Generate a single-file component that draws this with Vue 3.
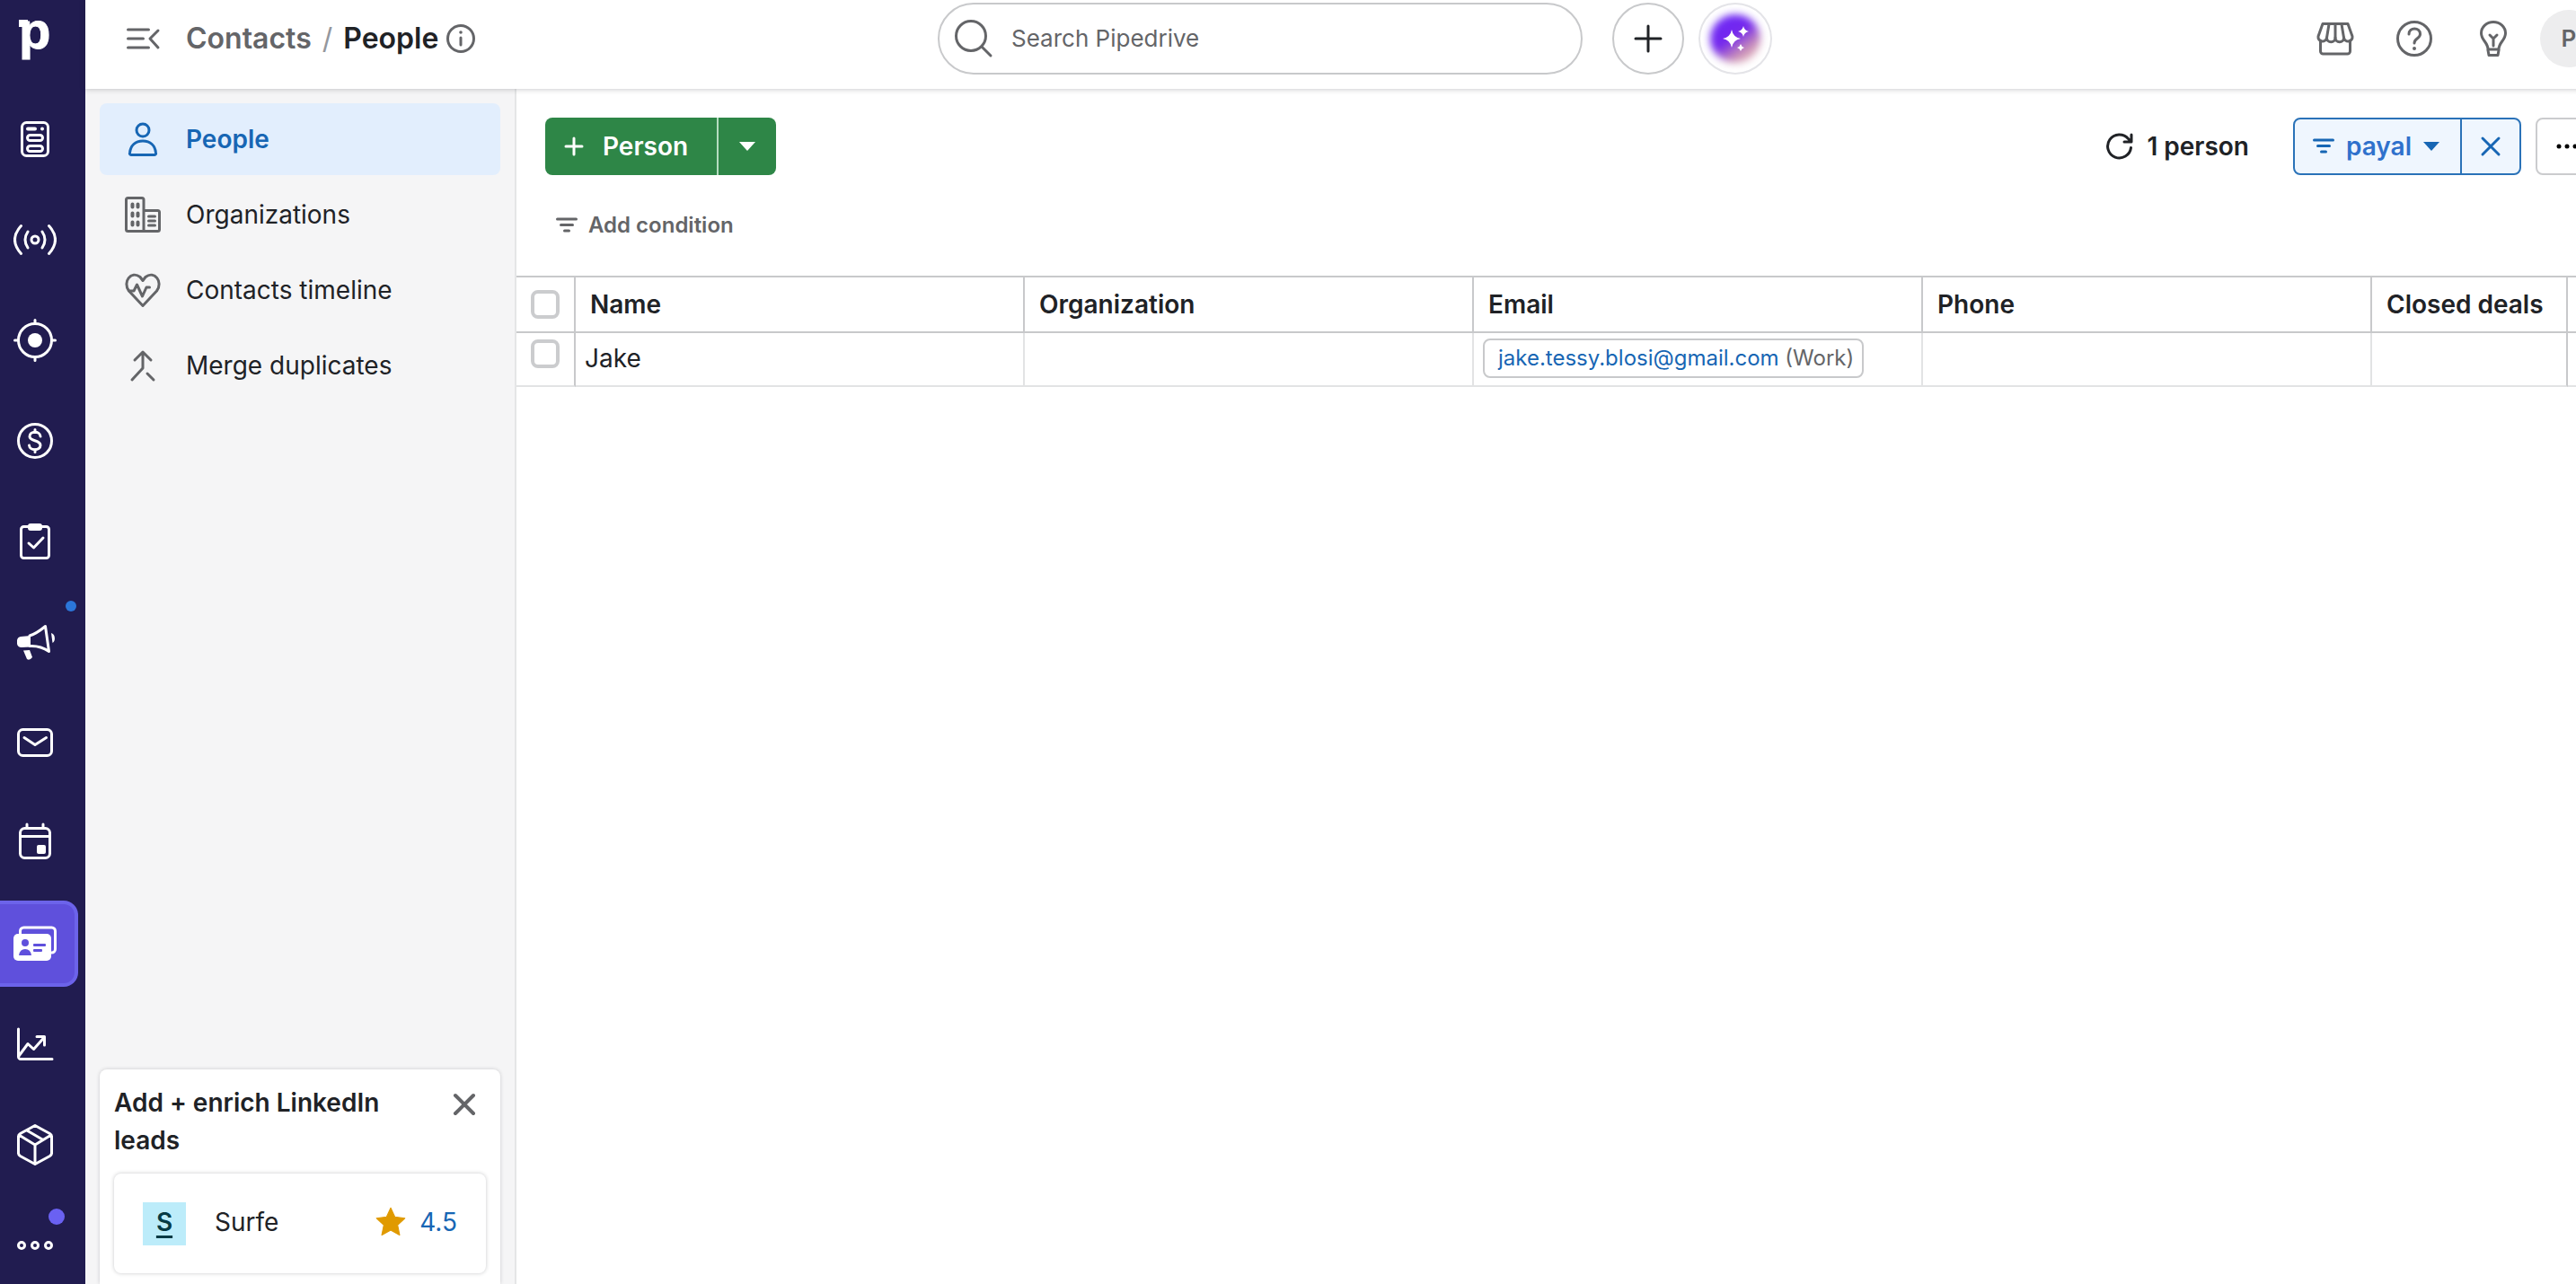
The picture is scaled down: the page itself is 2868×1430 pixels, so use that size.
<template>
    <div class="viewport">
        <div class="app">
            <nav class="rail" aria-label="Main">
                <a href="#" class="logo" aria-label="Pipedrive"><span>p</span></a>
                <a v-for="item in railItems" :key="item.name" href="#" class="rail-item" :class="{ active: item.active }"
                    :aria-label="item.name">
                    <svg class="icon" viewBox="0 0 48 48" v-html="item.icon"></svg>
                    <i v-if="item.dot" class="dot" :class="item.dot"></i>
                </a>
            </nav>

            <div class="page">
                <header class="topbar">
                    <div class="crumbs">
                        <button class="plain" aria-label="Collapse menu">
                            <svg class="icon" viewBox="0 0 48 48">
                                <path d="M7.500 14h23M7.500 24h17M7.500 34h23M41 15l-9 9 9 10" />
                            </svg>
                        </button>
                        <h1>
                            <a href="#">Contacts</a>
                            <span class="slash">/</span>
                            <span>People</span>
                        </h1>
                        <svg class="icon info" viewBox="0 0 36 36">
                            <circle cx="18" cy="18" r="14.500" />
                            <path d="M18 17v8" />
                            <circle cx="18" cy="11" r="1.800" class="solid" />
                        </svg>
                    </div>
                    <label class="search">
                        <svg class="icon" viewBox="0 0 48 48">
                            <circle cx="21" cy="21" r="16.500" />
                            <path d="M33 33l10 10" />
                        </svg>
                        <input type="text" placeholder="Search Pipedrive" aria-label="Search Pipedrive">
                    </label>
                    <div class="quick">
                        <button class="round" aria-label="Quick add">
                            <svg class="icon" viewBox="0 0 48 48">
                                <path d="M24 10v28M10 24h28" />
                            </svg>
                        </button>
                        <button class="round ai" aria-label="Assistant">
                            <span class="glow"></span>
                            <svg viewBox="0 0 48 48">
                                <path d="M20 14q1.500 8.500 10 10q-8.500 1.500-10 10q-1.500-8.500-10-10q8.500-1.500 10-10z" />
                                <path d="M33 10q1 5 6 6q-5 1-6 6q-1-5-6-6q5-1 6-6z" />
                                <path d="M30 30q.8 3.200 4 4q-3.200.8-4 4q-.8-3.200-4-4q3.200-.8 4-4z" />
                            </svg>
                        </button>
                    </div>
                    <div class="tools">
                        <button class="plain" aria-label="Marketplace">
                            <svg class="icon" viewBox="0 0 48 48">
                                <path d="M10 7.500h28l5 14a4.500 4.500 0 0 1-9.500 1.500a4.700 4.700 0 0 1-9.500 0a4.700 4.700 0 0 1-9.500 0a4.500 4.500 0 0 1-9.500-1.500z" />
                                <path d="M17 8l-2.500 15M24 8v15M31 8l2.500 15M7.500 26v12a3 3 0 0 0 3 3h27a3 3 0 0 0 3-3V26" />
                            </svg>
                        </button>
                        <button class="plain" aria-label="Help">
                            <svg class="icon" viewBox="0 0 48 48">
                                <circle cx="24" cy="24" r="18.500" />
                                <path d="M18 19c0-8 12.500-8 12.500 0c0 5-6.500 4.500-6.500 10" />
                                <circle cx="24" cy="35" r="2" class="solid" />
                            </svg>
                        </button>
                        <button class="plain" aria-label="Tips">
                            <svg class="icon" viewBox="0 0 48 48">
                                <path d="M18 36c0-8-7.500-10-7.500-18a13.500 12.500 0 0 1 27 0c0 8-7.500 10-7.500 18z" />
                                <path d="M18 37l1 5.500h10l1-5.500M20 20l4 4 4-4M24 24v8" />
                            </svg>
                        </button>
                        <button class="avatar" aria-label="Account">P</button>
                    </div>
                </header>

                <div class="body">
                    <aside class="side">
                        <nav class="side-nav" aria-label="Contacts">
                            <a v-for="link in sideLinks" :key="link.label" href="#" :class="{ current: link.current }">
                                <svg class="icon" viewBox="0 0 48 48" v-html="link.icon"></svg>
                                {{ link.label }}
                            </a>
                        </nav>
                        <section class="promo">
                            <div class="promo-head">
                                <h2>Add + enrich LinkedIn leads</h2>
                                <button class="plain" aria-label="Dismiss">
                                    <svg class="icon bold" viewBox="0 0 32 32">
                                        <path d="M6 6l20 20M26 6L6 26" />
                                    </svg>
                                </button>
                            </div>
                            <a href="#" class="promo-app">
                                <span class="surfe">S</span>
                                <span class="promo-name">Surfe</span>
                                <svg class="star" viewBox="0 0 32 32">
                                    <path d="M16 2l4.200 9 9.800 1.200-7.200 6.700 2 9.900L16 24l-8.800 4.800 2-9.900L2 12.200 11.800 11z" />
                                </svg>
                                <span class="rating">4.5</span>
                            </a>
                        </section>
                    </aside>

                    <main class="main">
                        <div class="toolbar">
                            <div class="split green">
                                <button class="add">
                                    <svg class="icon" viewBox="0 0 24 24">
                                        <path d="M12 3v18M3 12h18" />
                                    </svg>
                                    Person
                                </button>
                                <button class="more" aria-label="More ways to add"><i class="caret"></i></button>
                            </div>
                            <div class="spacer"></div>
                            <button class="plain count">
                                <svg class="icon" viewBox="0 0 32 32">
                                    <path d="M28.500 17.500a13 13 0 1 1-3-10l3 3M29 3v8h-8" />
                                </svg>
                                1 person
                            </button>
                            <div class="split blue">
                                <button class="filter">
                                    <svg class="icon" viewBox="0 0 24 24">
                                        <path d="M1.500 5h21M5.500 11.500h13M9.500 18h5" />
                                    </svg>
                                    payal
                                    <i class="caret"></i>
                                </button>
                                <button class="clear" aria-label="Clear filter">
                                    <svg class="icon" viewBox="0 0 24 24">
                                        <path d="M3 3l18 18M21 3L3 21" />
                                    </svg>
                                </button>
                            </div>
                            <button class="overflow" aria-label="More options">
                                <svg viewBox="0 0 24 24">
                                    <circle cx="3" cy="12" r="2.500" />
                                    <circle cx="12" cy="12" r="2.500" />
                                    <circle cx="21" cy="12" r="2.500" />
                                </svg>
                            </button>
                        </div>
                        <button class="plain condition">
                            <svg class="icon" viewBox="0 0 24 24">
                                <path d="M1.500 5h21M5.500 11.500h13M9.500 18h5" />
                            </svg>
                            Add condition
                        </button>

                        <table>
                            <colgroup>
                                <col class="c-check">
                                <col v-for="n in 4" :key="n" class="c-wide">
                                <col class="c-deals">
                                <col>
                            </colgroup>
                            <thead>
                                <tr>
                                    <th><input type="checkbox" aria-label="Select all"></th>
                                    <th v-for="col in columns" :key="col">{{ col }}</th>
                                    <th></th>
                                </tr>
                            </thead>
                            <tbody>
                                <tr v-for="person in people" :key="person.email">
                                    <td><input type="checkbox" :aria-label="'Select ' + person.name"></td>
                                    <td>{{ person.name }}</td>
                                    <td></td>
                                    <td>
                                        <span class="email"><a href="#">{{ person.email }}</a> ({{ person.type }})</span>
                                    </td>
                                    <td></td>
                                    <td></td>
                                    <td></td>
                                </tr>
                            </tbody>
                        </table>
                    </main>
                </div>
            </div>
        </div>
    </div>
</template>

<script setup>
const railItems = [
    {
        name: 'Pulse',
        icon: '<rect x="9.500" y="5.500" width="29" height="37" rx="5"/><path d="M16 12.500h8" stroke-width="4"/><circle cx="32" cy="12.500" r="2" class="solid"/><rect x="15.500" y="19.500" width="17" height="6" rx="3"/><rect x="15.500" y="31.500" width="17" height="6" rx="3"/>',
    },
    {
        name: 'Prospecting',
        icon: '<circle cx="24" cy="24" r="4"/><path d="M16 15q-6 9 0 18M32 15q6 9 0 18M8.500 8.500q-14 15.500 0 31M39.500 8.500q14 15.500 0 31"/>',
    },
    {
        name: 'Leads',
        icon: '<circle cx="24" cy="24" r="18.500"/><circle cx="24" cy="24" r="8" class="solid"/><path d="M24 1.500v4M24 42.500v4M1.500 24h4M42.500 24h4"/>',
    },
    {
        name: 'Deals',
        icon: '<circle cx="24" cy="24" r="18.500"/><path d="M30 19c-.5-6.500-12-6-12 0c0 6 12 3.500 12 10c0 6-12 6.500-12.500 0M24 11.500v3M24 33.500v3"/>',
    },
    {
        name: 'Projects',
        icon: '<rect x="8.500" y="7.500" width="31" height="35" rx="3"/><rect x="16" y="4" width="16" height="8" rx="3" class="solid"/><path d="M17 26l5.500 5L33 20"/>',
    },
    {
        name: 'Campaigns',
        dot: 'small',
        icon: '<path d="M18 17C25 15 30 11 35.500 6.500L39.500 34.500C33 30 26 28 18 28.500"/><path class="solid" d="M19 17v12.500l-10 .5a5 5 0 0 1-5-4v-4a5 5 0 0 1 4-4z"/><path class="solid" d="M11 33.500l7-.5 3 8q-3 4-6 2zM42 14a5 6 0 0 1 1.500 11z"/>',
    },
    {
        name: 'Mail',
        icon: '<rect x="5.500" y="9.500" width="37" height="29" rx="5"/><path d="M12 18.500l12 8 12.500-8"/>',
    },
    {
        name: 'Activities',
        icon: '<rect x="7.500" y="7.500" width="33" height="33" rx="5"/><path d="M8 16.500h32M15 3v4M33 3v4"/><rect x="26" y="26" width="10" height="10" rx="2" class="solid"/>',
    },
    {
        name: 'Contacts',
        active: true,
        icon: '<path d="M7.500 14V10a4 4 0 0 1 4-4h31a4 4 0 0 1 4 4v20a4 4 0 0 1-4 4"/><rect x="0" y="13" width="42" height="30" rx="5" class="solid"/><g class="cut"><circle cx="13" cy="23" r="4"/><path d="M6 37q1-7 7-7t7 7z"/><rect x="22" y="24" width="14" height="3" rx="1"/><rect x="22" y="30" width="10" height="3" rx="1"/></g>',
    },
    {
        name: 'Insights',
        icon: '<path d="M5.500 7v31a2.500 2.500 0 0 0 2.500 2.500h35M6 37l10-13.500 6.500 6L34.500 16M26 15.500h8.500V25"/>',
    },
    {
        name: 'Products',
        icon: '<path d="M24 2.500l16.500 9a4 4 0 0 1 2 3v19a4 4 0 0 1-2 3L24 45.500l-16.500-9a4 4 0 0 1-2-3v-19a4 4 0 0 1 2-3zM6 13l18 11 18-11M24 24v21M15 8l18 10.500"/>',
    },
    {
        name: 'More',
        dot: 'large',
        icon: '<circle cx="9" cy="24" r="3.500"/><circle cx="24" cy="24" r="3.500"/><circle cx="39" cy="24" r="3.500"/>',
    },
];

const sideLinks = [
    {
        label: 'People',
        current: true,
        icon: '<circle cx="24" cy="14" r="7"/><path d="M11 41.500a1.800 1.800 0 0 1-1.500-2.500c1-8 6-13 14.500-13s13.500 5 14.500 13a1.800 1.800 0 0 1-1.500 2.500z"/>',
    },
    {
        label: 'Organizations',
        icon: '<path d="M25 42.500V7.500a2 2 0 0 0-2-2H7.500a2 2 0 0 0-2 2v33a2 2 0 0 0 2 2h33a2 2 0 0 0 2-2v-19a2 2 0 0 0-2-2H25"/><path stroke-width="4" d="M12.500 12.500v3M18.500 12.500v3M12.500 22.500v3M18.500 22.500v3M12.500 32.500v3M18.500 32.500v3"/><path d="M30.500 26h7M30.500 31h7M30.500 36h7"/>',
    },
    {
        label: 'Contacts timeline',
        icon: '<path d="M24 41.500L8.500 25C1 15 11 2 21 9.500l3 4 3-4C37 2 47 15 39.500 25z"/><path d="M9 25h5l3.500-7 6 13 4.500-10h3.500"/>',
    },
    {
        label: 'Merge duplicates',
        icon: '<path d="M15 18l9-9 9 9M24 9.500V27L12 40M29 33l7 7"/>',
    },
];

const columns = ['Name', 'Organization', 'Email', 'Phone', 'Closed deals'];

const people = [
    { name: 'Jake', email: 'jake.tessy.blosi@gmail.com', type: 'Work' },
];
</script>

<style>
body {
    margin: 0;
    background: #fff;
}
</style>

<style scoped>
.viewport {
    height: 100vh;
    overflow: hidden;
    font-family: Inter, 'Liberation Sans', sans-serif;
    font-size: 28px;
    line-height: 40px;
    color: #202226;
}

/* the layout runs slightly past the right edge of the window */
.app {
    display: flex;
    width: calc(100% + 24px);
    height: 100%;
}

.viewport * {
    box-sizing: border-box;
}

a {
    color: inherit;
    text-decoration: none;
}

button {
    display: flex;
    align-items: center;
    justify-content: center;
    margin: 0;
    padding: 0;
    border: 0;
    background: none;
    font: inherit;
    font-weight: 600;
    color: inherit;
}

svg {
    display: block;
    flex: none;
    width: 48px;
    height: 48px;
}

.icon {
    fill: none;
    stroke: currentColor;
    stroke-width: 3;
    stroke-linecap: round;
    stroke-linejoin: round;
}

.icon :deep(.solid),
.icon .solid {
    fill: currentColor;
    stroke: none;
}

.icon :deep(.cut) {
    fill: #5f50dc;
    stroke: none;
}

.plain {
    color: #646568;
}

/* left rail */
.rail {
    flex: none;
    display: flex;
    flex-direction: column;
    gap: 16px;
    width: 95px;
    background: #211c50;
    color: #fff;
}

.logo {
    flex: none;
    height: 91px;
    padding-left: 21px;
    font-family: 'Liberation Sans', sans-serif;
    font-size: 58px;
    font-weight: 700;
    line-height: 68px;
    -webkit-text-stroke: 1px #fff;
}

.logo span {
    position: relative;
}

.logo span::before {
    content: '';
    position: absolute;
    left: 0;
    top: 21px;
    width: 10px;
    height: 8px;
    background: #fff;
}

.rail-item {
    position: relative;
    flex: none;
    display: flex;
    align-items: center;
    width: 87px;
    height: 96px;
    padding-left: 15px;
}

.rail-item.active {
    border: 4px solid #6c63ea;
    border-left: 0;
    border-radius: 0 16px 16px 0;
    background: #5f50dc;
}

.dot {
    position: absolute;
    border-radius: 50%;
}

.dot.small {
    top: 2px;
    right: 2px;
    width: 12px;
    height: 12px;
    background: #2b76d9;
}

.dot.large {
    top: 7px;
    right: 15px;
    width: 18px;
    height: 18px;
    background: #6a61f2;
}

/* header */
.page {
    flex: 1;
    display: flex;
    flex-direction: column;
    min-width: 0;
}

.topbar {
    position: relative;
    z-index: 1;
    display: grid;
    grid-template-columns: 949px minmax(400px, 718px) auto 1fr;
    align-items: start;
    height: 99px;
    padding-top: 3px;
    background: #fff;
    box-shadow: 0 0 6px rgba(33, 35, 44, 0.3);
}

.crumbs {
    display: flex;
    align-items: center;
    height: 80px;
    padding-left: 40px;
}

.crumbs h1 {
    margin: 0 7px 0 24px;
    font-size: 32px;
    font-weight: 600;
    white-space: nowrap;
}

.crumbs h1 a {
    color: #646568;
}

.slash {
    margin: 0 4px;
    padding: 0 8px;
    font-weight: 400;
    color: #94979d;
}

.info {
    width: 36px;
    height: 36px;
    color: #646568;
}

.search {
    display: flex;
    align-items: center;
    gap: 18px;
    height: 80px;
    padding: 0 24px 0 14px;
    border: 2px solid #c8c9cb;
    border-radius: 40px;
    font-size: 26px;
    color: #646568;
}

.search input {
    flex: 1;
    min-width: 0;
    padding: 0;
    border: 0;
    outline: 0;
    background: none;
    font: inherit;
}

.search input::placeholder {
    color: #646568;
    opacity: 1;
}

.quick {
    display: flex;
    gap: 16px;
    margin-left: 33px;
}

.round {
    position: relative;
    width: 80px;
    height: 80px;
    border: 2px solid #c8c9cb;
    border-radius: 50%;
}

.round.ai {
    width: 82px;
    border-color: #e4e4e8;
}

.glow {
    position: absolute;
    inset: 11px;
    border-radius: 50%;
    background: linear-gradient(145deg, #6f2cf5 10%, #7326ee 45%, #c990b8 72%, #f8d3c0 100%);
    filter: blur(4px);
}

.ai svg {
    position: relative;
    fill: #fff;
}

.tools {
    display: flex;
    align-items: center;
    justify-content: flex-end;
    gap: 40px;
    height: 80px;
}

.avatar {
    width: 64px;
    height: 64px;
    margin-left: -12px;
    border-radius: 50%;
    background: #ededee;
    font-size: 26px;
    color: #646568;
}

/* secondary navigation */
.body {
    flex: 1;
    display: flex;
    min-height: 0;
}

.side {
    flex: none;
    display: flex;
    flex-direction: column;
    justify-content: space-between;
    width: 480px;
    padding: 16px 16px 0;
    border-right: 2px solid #e5e6e7;
    background: #f5f5f6;
}

.side-nav {
    display: flex;
    flex-direction: column;
    gap: 4px;
}

.side-nav a {
    display: flex;
    align-items: center;
    gap: 24px;
    height: 80px;
    padding-left: 24px;
    border-radius: 8px;
}

.side-nav .icon {
    color: #646568;
}

.side-nav .current {
    background: #e2eefd;
    font-weight: 600;
    color: #1766b4;
}

.side-nav .current .icon {
    color: inherit;
}

.promo {
    padding: 16px 16px 12px;
    border-radius: 8px 8px 0 0;
    background: #fff;
    box-shadow: 0 0 4px rgba(33, 35, 44, 0.2);
}

.promo-head {
    display: flex;
    align-items: flex-start;
    justify-content: space-between;
    padding-right: 8px;
}

.promo h2 {
    width: 320px;
    margin: 0 0 16px;
    font-size: 28px;
    font-weight: 600;
    line-height: 42px;
}

.promo-head svg {
    width: 32px;
    height: 32px;
    margin-top: 7px;
}

.icon.bold {
    stroke-width: 4;
}

.promo-app {
    display: flex;
    align-items: center;
    height: 111px;
    padding: 0 32px;
    border-radius: 8px;
    box-shadow: 0 0 4px rgba(33, 35, 44, 0.25);
}

.surfe {
    width: 48px;
    height: 48px;
    background: #bcecfa;
    font-weight: 600;
    line-height: 44px;
    text-align: center;
    text-decoration: underline;
    text-decoration-thickness: 3px;
    text-underline-offset: 5px;
    color: #063a44;
}

.promo-name {
    flex: 1;
    margin-left: 32px;
}

.promo-name,
.rating,
.star {
    padding-bottom: 4px;
}

.star {
    width: 36px;
    height: 40px;
    margin-right: 14px;
    fill: #e09a00;
    stroke: #e09a00;
    stroke-linejoin: round;
}

.rating {
    color: #1766b4;
}

/* list view */
.main {
    flex: 1;
    min-width: 0;
}

.toolbar {
    display: flex;
    gap: 16px;
    padding: 32px 0 0 32px;
}

.toolbar svg,
.condition svg {
    width: 24px;
    height: 24px;
}

.split {
    display: flex;
    height: 64px;
    border-radius: 8px;
    overflow: hidden;
}

.green {
    background: #2e8647;
    color: #fff;
}

.green .add {
    justify-content: flex-start;
    gap: 20px;
    width: 191px;
    padding-left: 20px;
}

.green .more {
    width: 66px;
    border-left: 2px solid #b5dcbf;
}

.caret {
    border: 9px solid transparent;
    border-top: 10px solid currentColor;
    border-bottom: 0;
}

.spacer {
    flex: 1;
}

.toolbar .count {
    gap: 14px;
    margin-right: 33px;
    color: #202226;
}

.toolbar .count svg {
    width: 32px;
    height: 32px;
}

.blue {
    border: 2px solid #2a72b8;
    background: #eff6fe;
    color: #1766b4;
}

.blue .filter {
    justify-content: flex-start;
    gap: 13px;
    width: 184px;
    padding-left: 20px;
    color: #2f71cc;
}

.blue .filter .icon,
.blue .caret {
    color: #1766b4;
}

.blue .clear {
    width: 66px;
    border-left: 2px solid #2a72b8;
}

.overflow {
    width: 69px;
    height: 64px;
    border: 2px solid #cbccce;
    border-radius: 8px;
}

.condition {
    gap: 12px;
    height: 48px;
    margin: 32px 0 32px 44px;
    font-size: 24px;
}

table {
    width: 100%;
    table-layout: fixed;
    border-spacing: 0;
    border-top: 2px solid #c8c9cb;
}

.c-check {
    width: 66px;
}

.c-wide {
    width: 500px;
}

.c-deals {
    width: 218px;
}

th,
td {
    padding: 0 16px;
    text-align: left;
    white-space: nowrap;
}

th {
    height: 62px;
    border-right: 2px solid #c8c9cb;
    border-bottom: 2px solid #c8c9cb;
    font-weight: 600;
}

td {
    height: 60px;
    padding: 0 10px 2px;
    border-right: 2px solid #e2e3e4;
    border-bottom: 2px solid #e2e3e4;
}

td:first-child,
td:nth-child(6) {
    border-right-color: #c8c9cb;
}

td:first-child {
    padding: 7px 16px 0;
    vertical-align: top;
}

input[type='checkbox'] {
    display: block;
    appearance: none;
    width: 32px;
    height: 32px;
    margin: 0;
    border: 4px solid #cbccce;
    border-radius: 8px;
    background: #fff;
}

.email {
    display: block;
    width: max-content;
    padding: 0 9px 0 15px;
    border: 2px solid #c8c9cb;
    border-radius: 8px;
    font-size: 24px;
    color: #646568;
}

.email a {
    color: #1766b4;
}
</style>
